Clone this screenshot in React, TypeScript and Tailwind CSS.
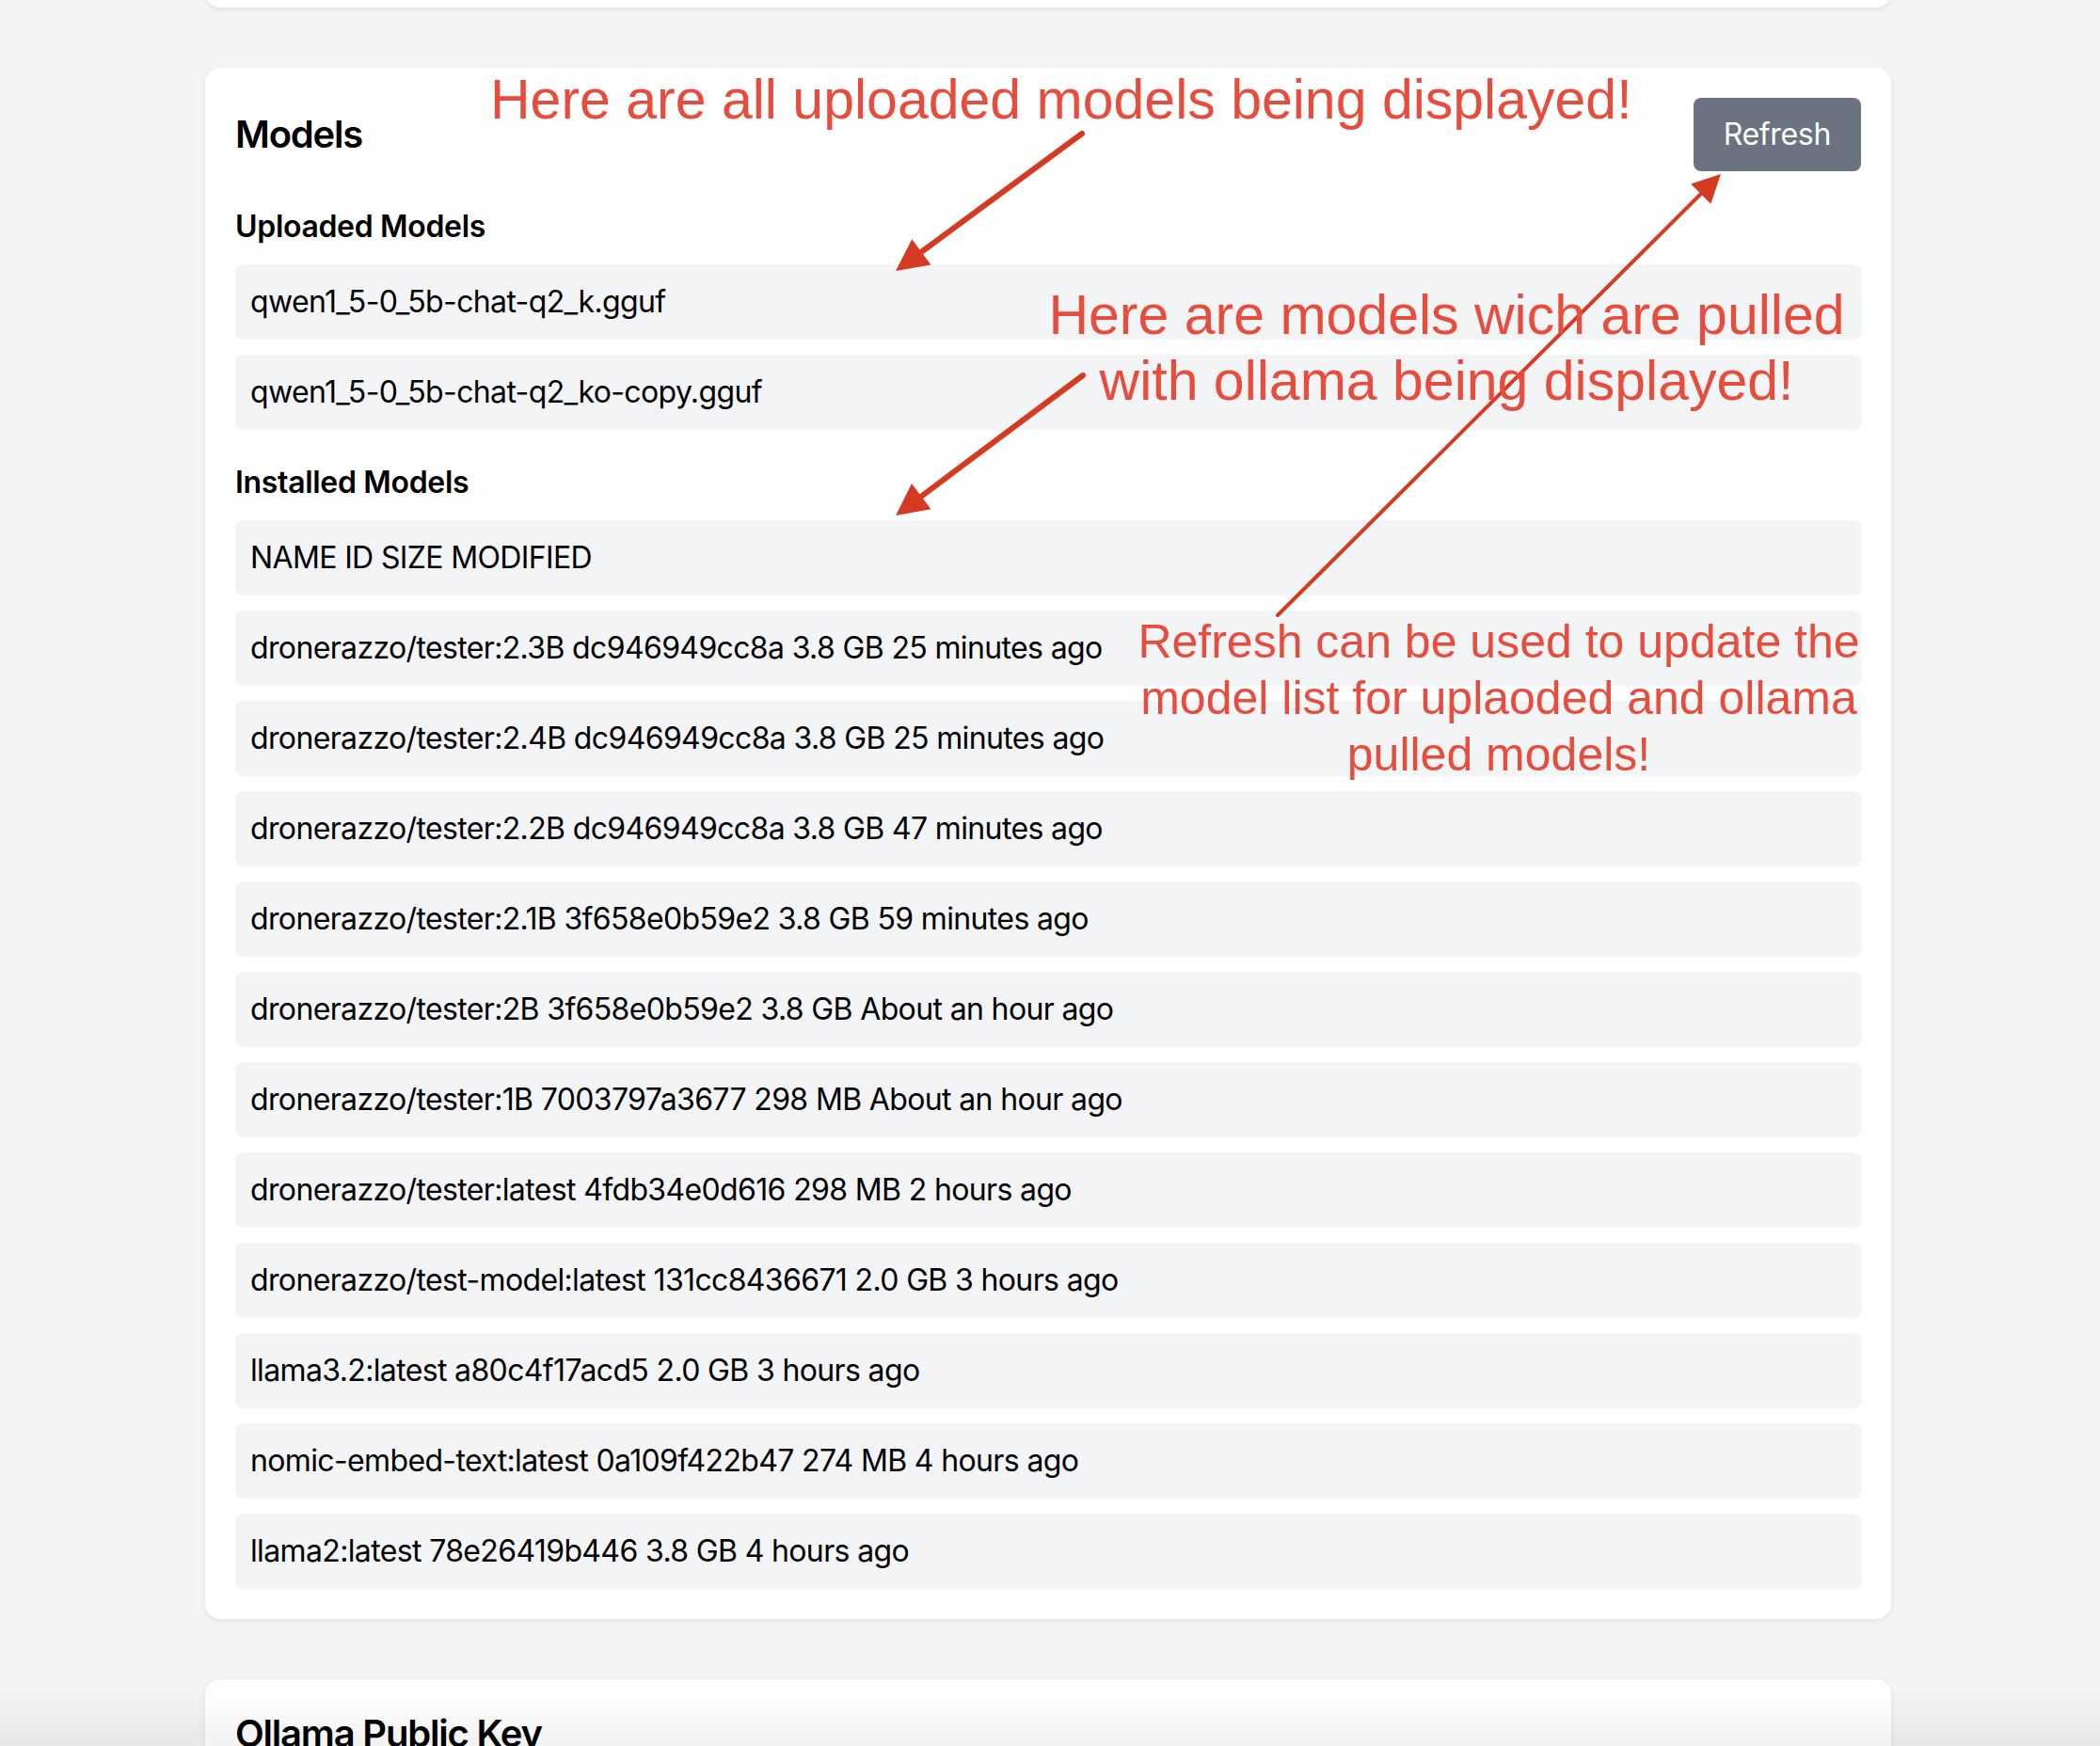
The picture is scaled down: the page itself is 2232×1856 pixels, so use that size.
import React from 'react';

// ─── Data ─────────────────────────────────────────────────────────────
const uploadedModels = ['qwen1_5-0_5b-chat-q2_k.gguf', 'qwen1_5-0_5b-chat-q2_ko-copy.gguf'];

const installedModels = [
  'NAME ID SIZE MODIFIED',
  'dronerazzo/tester:2.3B dc946949cc8a 3.8 GB 25 minutes ago',
  'dronerazzo/tester:2.4B dc946949cc8a 3.8 GB 25 minutes ago',
  'dronerazzo/tester:2.2B dc946949cc8a 3.8 GB 47 minutes ago',
  'dronerazzo/tester:2.1B 3f658e0b59e2 3.8 GB 59 minutes ago',
  'dronerazzo/tester:2B 3f658e0b59e2 3.8 GB About an hour ago',
  'dronerazzo/tester:1B 7003797a3677 298 MB About an hour ago',
  'dronerazzo/tester:latest 4fdb34e0d616 298 MB 2 hours ago',
  'dronerazzo/test-model:latest 131cc8436671 2.0 GB 3 hours ago',
  'llama3.2:latest a80c4f17acd5 2.0 GB 3 hours ago',
  'nomic-embed-text:latest 0a109f422b47 274 MB 4 hours ago',
  'llama2:latest 78e26419b446 3.8 GB 4 hours ago',
];

// ─── Arrow (annotation) ───────────────────────────────────────────────
function Arrow({ x1, y1, x2, y2, width, head }: { x1: number; y1: number; x2: number; y2: number; width: number; head: number }) {
  const dx = x2 - x1;
  const dy = y2 - y1;
  const len = Math.hypot(dx, dy);
  const ux = dx / len;
  const uy = dy / len;
  // base of the arrow head
  const bx = x2 - ux * head;
  const by = y2 - uy * head;
  const half = head * 0.5;
  const pts = `${x2},${y2} ${bx - uy * half},${by + ux * half} ${bx + uy * half},${by - ux * half}`;
  return (
    <g>
      <line x1={x1} y1={y1} x2={bx + ux * 2} y2={by + uy * 2} stroke="#d43b22" strokeWidth={width} strokeLinecap="round" />
      <polygon points={pts} fill="#d43b22" />
    </g>
  );
}

function ListRow({ text }: { text: string }) {
  return (
    <div className="bg-[#f3f4f6] rounded-[8px] px-[16px] py-[16px] text-[32px] leading-[48px] tracking-[-0.02em] text-black">
      {text}
    </div>
  );
}

export default function App() {
  return (
    <div
      className="relative h-[1856px] overflow-hidden bg-[#f3f4f6] tracking-[-0.02em]"
      style={{ fontFamily: 'Inter, "Noto Sans", "Liberation Sans", sans-serif' }}
    >
      <div className="ml-[218px] w-[1792px] flex flex-col gap-[64px]">
        {/* previous card, cut off at the top */}
        <div className="-mt-[40px] h-[48px] bg-white rounded-[16px] shadow-[0_2px_6px_rgba(0,0,0,0.08)]" />

        {/* ── Models card ───────────────────────────────────────── */}
        <section className="bg-white rounded-[16px] shadow-[0_2px_6px_rgba(0,0,0,0.08)] p-[32px]">
          <div className="flex items-center justify-between mb-[35px]">
            <h2 className="text-[40px] leading-[56px] font-semibold tracking-[-0.03em] text-black">Models</h2>
            <button className="bg-[#6b7280] text-white text-[32px] leading-[48px] px-[32px] py-[15px] rounded-[8px]">
              Refresh
            </button>
          </div>

          <h3 className="text-[32px] leading-[48px] font-semibold text-black mb-[16px] mt-[2px]">Uploaded Models</h3>
          <div className="flex flex-col gap-[16px]">
            {uploadedModels.map((m) => (
              <ListRow key={m} text={m} />
            ))}
          </div>

          <h3 className="text-[32px] leading-[48px] font-semibold text-black mt-[32px] mb-[16px]">Installed Models</h3>
          <div className="flex flex-col gap-[16px]">
            {installedModels.map((m) => (
              <ListRow key={m} text={m} />
            ))}
          </div>
        </section>

        {/* ── Ollama Public Key card (cut off) ──────────────────── */}
        <section className="bg-white rounded-[16px] shadow-[0_2px_6px_rgba(0,0,0,0.08)] px-[32px] pt-[30px] h-[200px]">
          <h2 className="text-[40px] leading-[56px] font-semibold tracking-[-0.03em] text-black">Ollama Public Key</h2>
        </section>
      </div>

      {/* ── Annotations ─────────────────────────────────────────── */}
      <svg className="absolute inset-0 pointer-events-none" width={2232} height={1856}>
        <Arrow x1={1150} y1={142} x2={952} y2={288} width={6} head={34} />
        <Arrow x1={1151} y1={399} x2={952} y2={548} width={6} head={34} />
        <Arrow x1={1358} y1={654} x2={1829} y2={185} width={4} head={30} />
      </svg>

      <div
        className="absolute left-[521px] top-[76px] text-[59px] leading-[60px] tracking-normal text-[#e74c3c] whitespace-nowrap pointer-events-none"
        style={{ fontFamily: '"Liberation Sans", Arial, sans-serif' }}
      >
        Here are all uploaded models being displayed!
      </div>

      <div
        className="absolute left-[1100px] top-[300px] w-[875px] text-center text-[59px] leading-[70px] tracking-normal text-[#e74c3c] whitespace-nowrap pointer-events-none"
        style={{ fontFamily: '"Liberation Sans", Arial, sans-serif' }}
      >
        Here are models wich are pulled
        <br />
        with ollama being displayed!
      </div>

      <div
        className="absolute left-[1193px] top-[652px] w-[800px] text-center text-[50px] leading-[60px] tracking-normal text-[#e74c3c] whitespace-nowrap pointer-events-none"
        style={{ fontFamily: '"Liberation Sans", Arial, sans-serif' }}
      >
        Refresh can be used to update the
        <br />
        model list for uplaoded and ollama
        <br />
        pulled models!
      </div>

      {/* faint window shadow along the bottom edge */}
      <div className="absolute left-0 right-0 bottom-0 h-[60px] bg-gradient-to-b from-transparent to-[rgba(0,0,0,0.05)] pointer-events-none" />
    </div>
  );
}
